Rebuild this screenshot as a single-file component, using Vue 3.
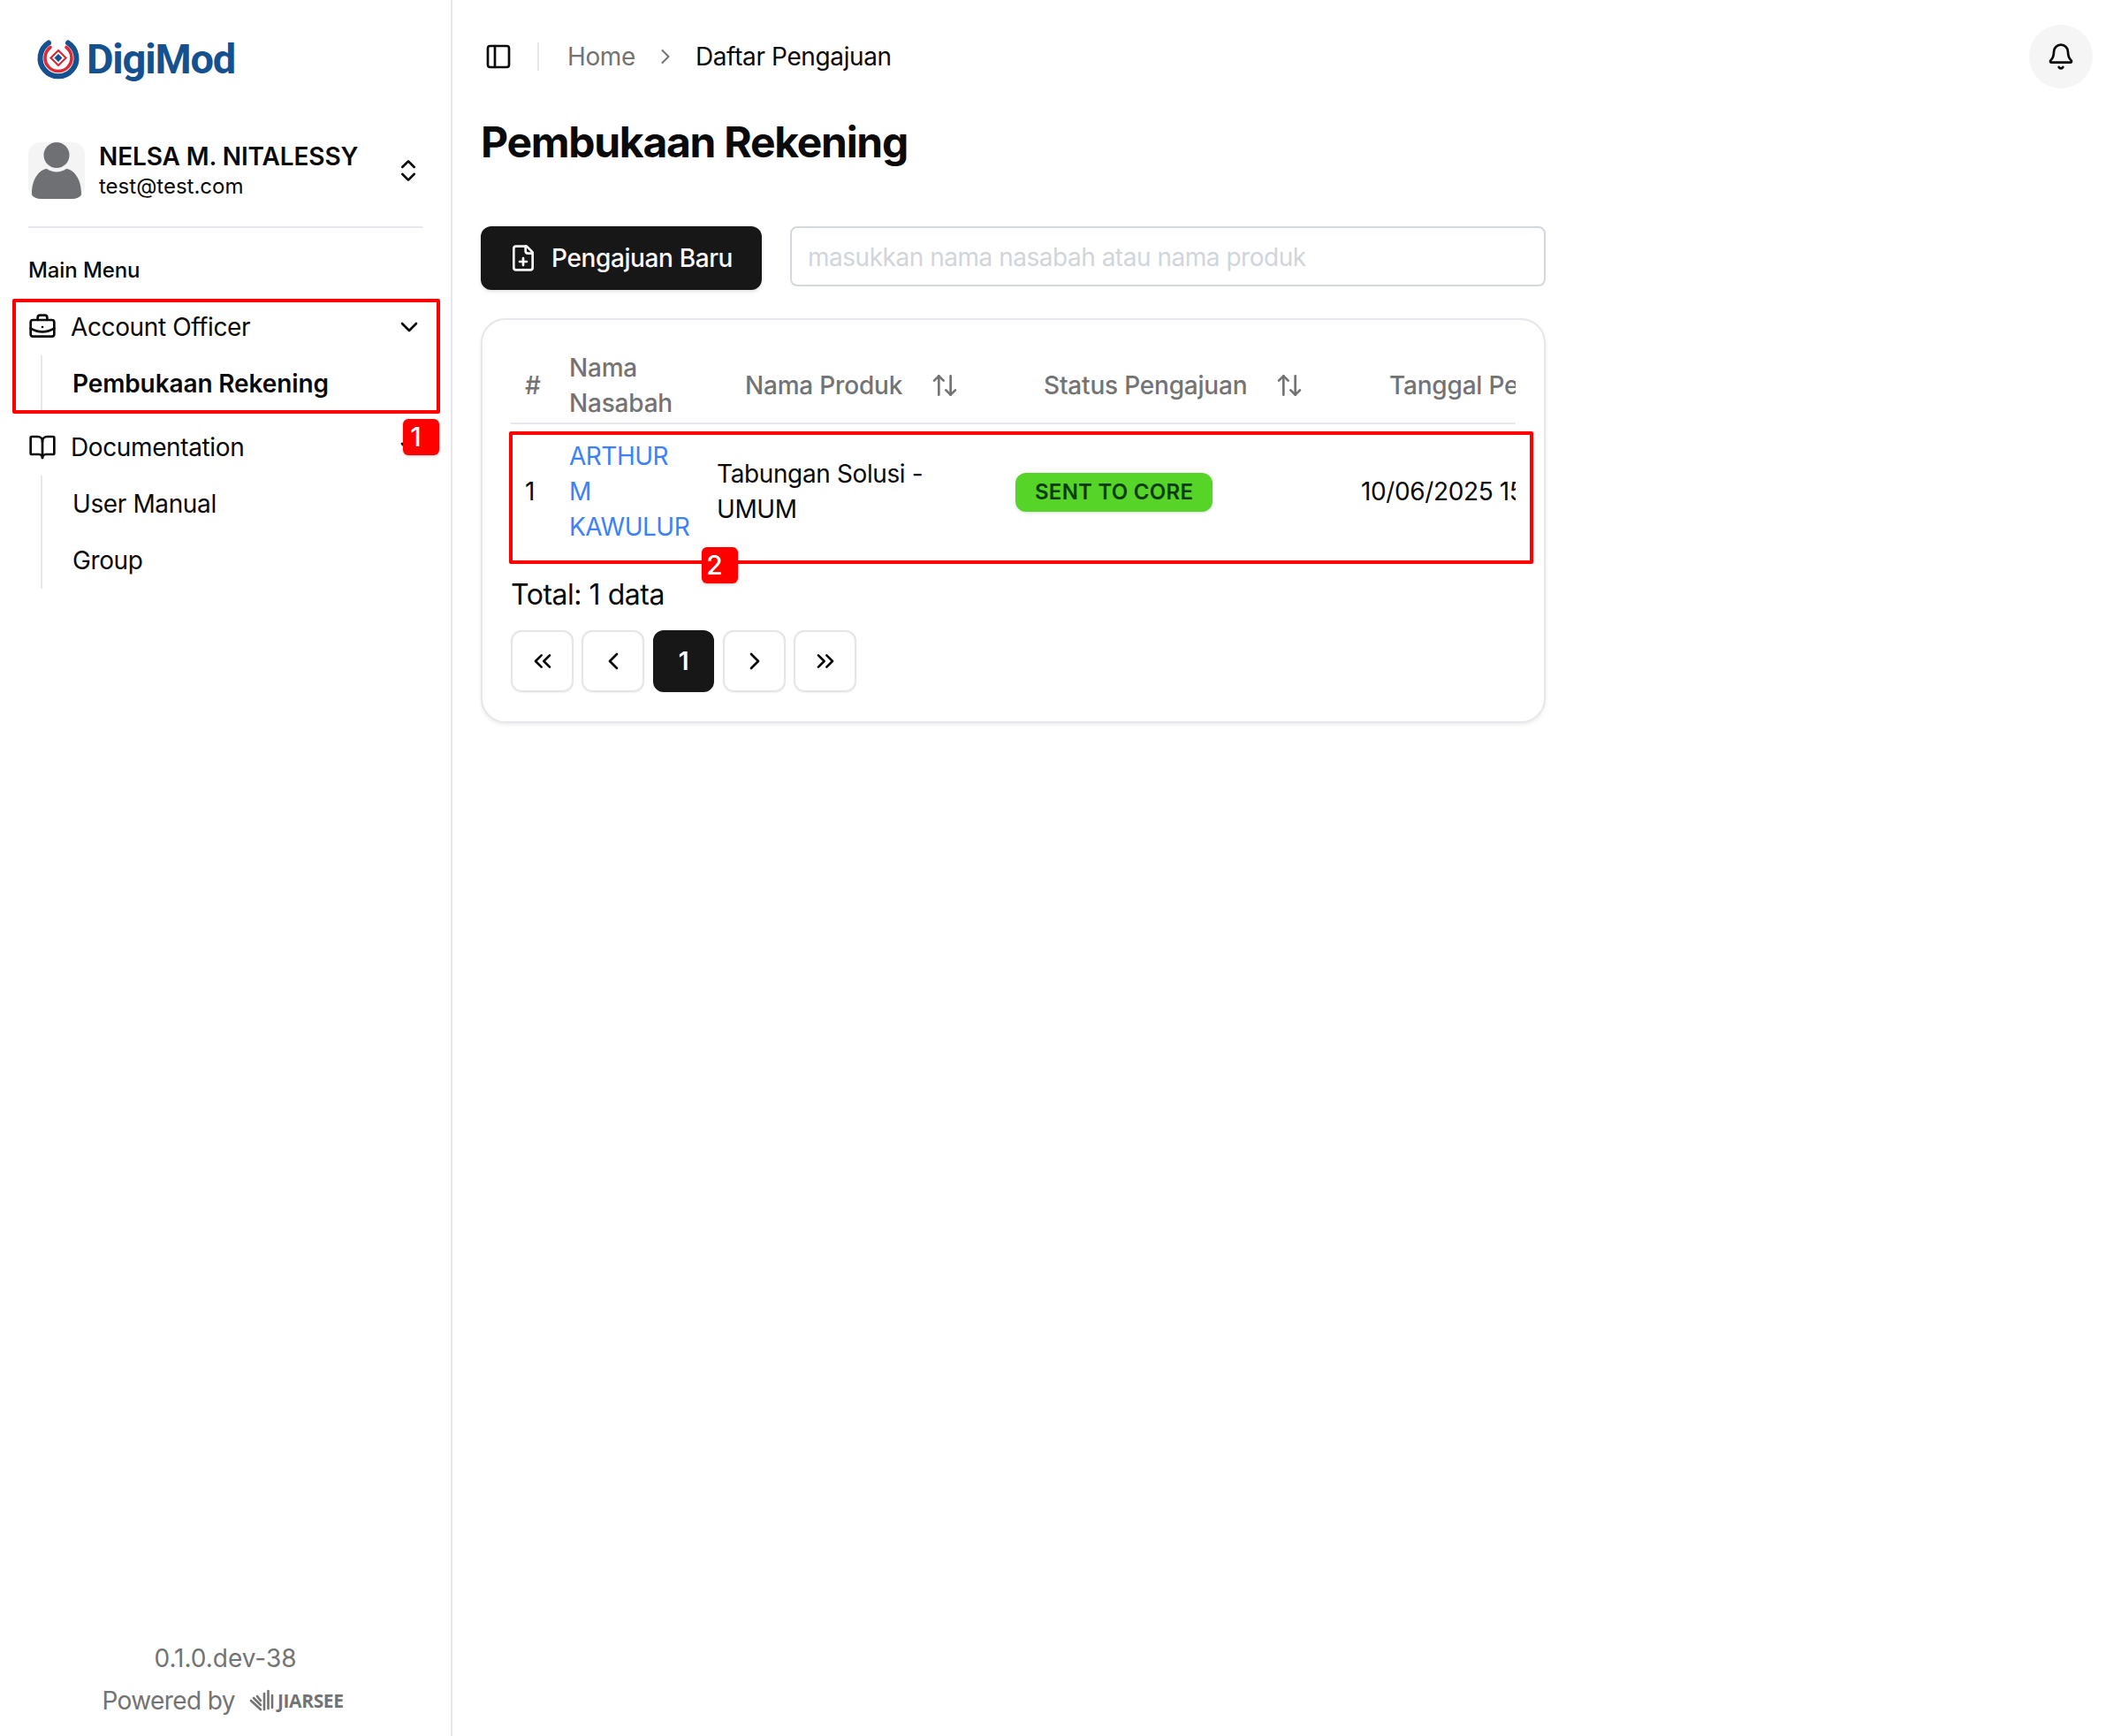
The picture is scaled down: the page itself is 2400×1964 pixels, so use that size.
<script setup>
const menus = [
  { key: 'ao', label: 'Account Officer', icon: 'brief', subs: [{ label: 'Pembukaan Rekening', active: true }] },
  { key: 'doc', label: 'Documentation', icon: 'book', subs: [{ label: 'User Manual' }, { label: 'Group' }] },
]
const pages = [
  { key: 'first', paths: ['m11 17-5-5 5-5', 'm18 17-5-5 5-5'] },
  { key: 'prev', paths: ['m15 18-6-6 6-6'] },
  { key: 'one', text: '1' },
  { key: 'next', paths: ['m9 18 6-6-6-6'] },
  { key: 'last', paths: ['m6 17 5-5-5-5', 'm13 17 5-5-5-5'] },
]
</script>

<template>
  <div class="app">
    <aside class="sidebar">
      <div class="logo">
        <svg class="logo-mark" viewBox="0 0 50 46" width="50" height="46">
          <path d="M14 4.500A20.500 20.500 0 1 0 36 4.500" fill="none" stroke="#15508f" stroke-width="6" stroke-linecap="round" />
          <path d="M16 9.500A15 15 0 1 0 34 9.500" fill="none" stroke="#dc2b37" stroke-width="3.600" stroke-linecap="round" />
          <path d="M25 13 33.500 21.500 25 30 16.500 21.500Z" fill="none" stroke="#dc2b37" stroke-width="2.200" />
          <path d="M25 17 29.500 21.500 25 26 20.500 21.500Z" fill="#15508f" />
        </svg>
        <span class="logo-text">DigiMod</span>
      </div>

      <div class="user">
        <div class="avatar">
          <svg viewBox="0 0 64 64" width="64" height="64">
            <circle cx="32" cy="14.500" r="14.500" fill="#6f7074" />
            <path d="M4 58C4 42 12 31 21 30c3 2 7 3.500 11 3.500S40 32 43 30c9 1 17 12 17 28 0 3-2 6-6 6H10c-4 0-6-3-6-6Z" fill="#6f7074" />
          </svg>
        </div>
        <div class="user-text">
          <div class="user-name">NELSA M. NITALESSY</div>
          <div class="user-mail">test@test.com</div>
        </div>
        <svg class="icon" viewBox="0 0 24 24"><path d="m7 15 5 5 5-5" /><path d="m7 9 5-5 5 5" /></svg>
      </div>

      <div class="menu-label">Main Menu</div>

      <nav class="nav">
        <div v-for="m in menus" :key="m.key" class="group">
          <div class="nav-row">
            <svg v-if="m.icon === 'brief'" class="icon" viewBox="0 0 24 24">
              <path d="M12 12h.01" /><path d="M16 6V4a2 2 0 0 0-2-2h-4a2 2 0 0 0-2 2v2" />
              <path d="M22 13a18.150 18.150 0 0 1-20 0" /><rect width="20" height="14" x="2" y="6" rx="2" />
            </svg>
            <svg v-else class="icon" viewBox="0 0 24 24">
              <path d="M12 7v14" />
              <path d="M3 18a1 1 0 0 1-1-1V4a1 1 0 0 1 1-1h5a4 4 0 0 1 4 4 4 4 0 0 1 4-4h5a1 1 0 0 1 1 1v13a1 1 0 0 1-1 1h-6a3 3 0 0 0-3 3 3 3 0 0 0-3-3z" />
            </svg>
            <span class="nav-label">{{ m.label }}</span>
            <svg class="icon" viewBox="0 0 24 24"><path d="m6 9 6 6 6-6" /></svg>
          </div>
          <div class="subs">
            <div v-for="s in m.subs" :key="s.label" class="sub" :class="{ active: s.active }">{{ s.label }}</div>
          </div>
        </div>
        <div class="mark mark-nav"></div>
        <div class="tag tag-one">1</div>
      </nav>

      <footer class="side-foot">
        <div class="version">0.1.0.dev-38</div>
        <div class="powered">
          <span>Powered by</span>
          <span class="jiarsee">
            <svg viewBox="0 0 30 28" width="30" height="28">
              <g stroke="#737373" stroke-width="2.600" stroke-linecap="round" fill="none">
                <path d="M26 8v14" /><path d="M21.500 3v20" /><path d="M17 6v18" />
                <path d="M2 14l11 10" /><path d="M5 11l8 8" /><path d="M9 9l4 5" />
              </g>
            </svg>
            <b>JIARSEE</b>
          </span>
        </div>
      </footer>
    </aside>

    <main class="main">
      <header class="topbar">
        <svg class="icon panel" viewBox="0 0 24 24"><rect width="18" height="18" x="3" y="3" rx="2" /><path d="M9 3v18" /></svg>
        <span class="sep"></span>
        <span class="crumb-home">Home</span>
        <svg class="icon crumb-arrow" viewBox="0 0 24 24"><path d="m9 18 6-6-6-6" /></svg>
        <span class="crumb-now">Daftar Pengajuan</span>
        <div class="bell">
          <svg class="icon" viewBox="0 0 24 24">
            <path d="M10.268 21a2 2 0 0 0 3.464 0" />
            <path d="M3.262 15.326A1 1 0 0 0 4 17h16a1 1 0 0 0 .74-1.673C19.410 13.956 18 12.499 18 8A6 6 0 0 0 6 8c0 4.499-1.411 5.956-2.738 7.326" />
          </svg>
        </div>
      </header>

      <h1 class="title">Pembukaan Rekening</h1>

      <div class="content">
        <div class="toolbar">
          <button class="new-btn">
            <svg class="icon" viewBox="0 0 24 24">
              <path d="M15 2H6a2 2 0 0 0-2 2v16a2 2 0 0 0 2 2h12a2 2 0 0 0 2-2V7Z" />
              <path d="M14 2v4a2 2 0 0 0 2 2h4" /><path d="M9 15h6" /><path d="M12 18v-6" />
            </svg>
            Pengajuan Baru
          </button>
          <input class="search" placeholder="masukkan nama nasabah atau nama produk" />
        </div>

        <section class="card">
          <div class="scroller">
            <table class="table">
              <colgroup>
                <col class="c1" /><col class="c2" /><col class="c3" /><col class="c4" /><col class="c5" />
              </colgroup>
              <thead>
                <tr>
                  <th>#</th>
                  <th>Nama<br />Nasabah</th>
                  <th>
                    <div class="sort">Nama Produk
                      <svg class="icon" viewBox="0 0 24 24"><path d="m21 16-4 4-4-4" /><path d="M17 20V4" /><path d="m3 8 4-4 4 4" /><path d="M7 4v16" /></svg>
                    </div>
                  </th>
                  <th>
                    <div class="sort">Status Pengajuan
                      <svg class="icon" viewBox="0 0 24 24"><path d="m21 16-4 4-4-4" /><path d="M17 20V4" /><path d="m3 8 4-4 4 4" /><path d="M7 4v16" /></svg>
                    </div>
                  </th>
                  <th><div class="sort">Tanggal Pengajuan</div></th>
                </tr>
              </thead>
              <tbody>
                <tr>
                  <td>1</td>
                  <td class="link">ARTHUR<br />M<br />KAWULUR</td>
                  <td>Tabungan Solusi -<br />UMUM</td>
                  <td><span class="status">SENT TO CORE</span></td>
                  <td class="nowrap">10/06/2025 15:30:00</td>
                </tr>
              </tbody>
            </table>
          </div>
          <div class="total">Total: 1 data</div>
          <div class="pager">
            <div v-for="p in pages" :key="p.key" class="page" :class="{ current: p.text }">
              <template v-if="p.text">{{ p.text }}</template>
              <svg v-else class="icon" viewBox="0 0 24 24"><path v-for="d in p.paths" :key="d" :d="d" /></svg>
            </div>
          </div>
          <div class="mark mark-row"></div>
          <div class="tag tag-two">2</div>
        </section>
      </div>
    </main>
  </div>
</template>

<style>
html, body { margin: 0; background: #fff; }
</style>

<style scoped>
.app {
  display: flex;
  width: 2400px;
  height: 1964px;
  overflow: hidden;
  background: #fff;
  color: #0a0a0a;
  font-family: Inter, "Liberation Sans", sans-serif;
  font-size: 28px;
  line-height: 40px;
  letter-spacing: -0.38px;
}
.icon {
  width: 32px;
  height: 32px;
  flex: none;
  fill: none;
  stroke: currentColor;
  stroke-width: 2;
  stroke-linecap: round;
  stroke-linejoin: round;
}
.sidebar {
  width: 512px;
  box-sizing: border-box;
  flex: none;
  display: flex;
  flex-direction: column;
  border-right: 2px solid #e5e7eb;
  position: relative;
}
.logo {
  height: 46px;
  margin: 44px 0 0 41px;
  display: flex;
  align-items: center;
  gap: 7px;
}
.logo-text {
  font-family: Roboto, sans-serif;
  font-weight: 700;
  font-size: 47px;
  line-height: 46px;
  color: #15508f;
  letter-spacing: -1.2px;
}
.user {
  margin: 69px 32px 0;
  padding-bottom: 29px;
  border-bottom: 2px solid #e5e7eb;
  display: flex;
  align-items: center;
  gap: 16px;
}
.avatar {
  width: 64px;
  height: 64px;
  margin-top: -1px;
  border-radius: 14px;
  background: #f4f4f5;
  overflow: hidden;
  flex: none;
}
.avatar svg { display: block; }
.user-text { flex: 1; min-width: 0; }
.user-name { font-weight: 600; font-size: 28px; line-height: 36px; letter-spacing: -0.1px; }
.user-mail { font-size: 24px; line-height: 32px; letter-spacing: 0; }
.menu-label {
  margin: 32px 32px 0;
  font-size: 24px;
  font-weight: 500;
  line-height: 32px;
  letter-spacing: -0.1px;
}
.nav { margin: 16px 32px 0; position: relative; }
.group + .group { margin-top: 8px; }
.nav-row {
  height: 64px;
  display: flex;
  align-items: center;
  gap: 16px;
}
.nav-row .icon:last-child { margin-right: -1px; }
.nav-label { flex: 1; }
.subs {
  margin-left: 14px;
  border-left: 2px solid #e5e7eb;
  padding-left: 34px;
}
.sub { height: 64px; display: flex; align-items: center; }
.sub.active { font-weight: 600; letter-spacing: -0.12px; }
.mark {
  position: absolute;
  border: 4px solid #ff0000;
  box-sizing: border-box;
  border-radius: 2px;
  pointer-events: none;
}
.mark-nav { left: -18px; top: 0; width: 484px; height: 130px; }
.tag {
  position: absolute;
  width: 41px;
  height: 41px;
  background: #ff0000;
  color: #fff;
  border-radius: 6px;
  font-size: 30px;
  font-weight: 500;
  line-height: 40px;
  letter-spacing: 0;
  padding-right: 12px;
  box-sizing: border-box;
  text-align: center;
  box-shadow: 0 1px 3px rgba(0, 0, 0, 0.25);
}
.tag-one { left: 424px; top: 136px; }
.side-foot {
  margin-top: auto;
  padding-bottom: 16px;
  color: #737373;
  text-align: center;
  line-height: 48px;
}
.version { letter-spacing: 0; }
.powered {
  display: flex;
  justify-content: center;
  align-items: center;
  gap: 16px;
  padding-right: 6px;
  letter-spacing: -0.6px;
}
.jiarsee { display: inline-flex; align-items: center; gap: 2px; }
.jiarsee svg { display: block; }
.jiarsee b {
  font-family: "Open Sans", sans-serif;
  font-weight: 700;
  font-size: 21px;
  letter-spacing: -0.4px;
}
.main { flex: 1; min-width: 0; padding: 0 32px; position: relative; }
.topbar {
  height: 128px;
  display: flex;
  align-items: center;
}
.panel { margin-left: 4px; }
.sep {
  width: 2px;
  height: 32px;
  background: #e5e7eb;
  margin: 0 32px 0 28px;
}
.crumb-home { color: #737373; }
.crumb-arrow { width: 28px; height: 28px; color: #737373; margin: 0 20px; stroke-width: 1.700; }
.bell {
  position: absolute;
  right: 32px;
  top: 28px;
  width: 72px;
  height: 72px;
  border-radius: 50%;
  background: #f5f5f5;
  display: flex;
  align-items: center;
  justify-content: center;
}
.title {
  margin: 1px 0 0;
  font-size: 48px;
  font-weight: 700;
  line-height: 64px;
  letter-spacing: -1.28px;
}
.content { width: 1205px; margin-top: 63px; }
.toolbar { display: flex; align-items: flex-start; gap: 32px; }
.new-btn {
  height: 72px;
  width: 318px;
  flex: none;
  box-sizing: border-box;
  padding: 0 32px;
  display: flex;
  align-items: center;
  gap: 16px;
  background: #171717;
  color: #fafafa;
  border: none;
  border-radius: 12px;
  font: inherit;
  font-weight: 500;
  letter-spacing: inherit;
  white-space: nowrap;
  box-shadow: 0 2px 4px rgba(0, 0, 0, 0.12);
}
.search {
  flex: 1;
  min-width: 0;
  height: 68px;
  box-sizing: border-box;
  border: 2px solid #d4d8de;
  border-radius: 8px;
  padding: 2px 18px 0;
  font: inherit;
  letter-spacing: -0.48px;
  outline: none;
}
.search::placeholder { color: #d1d5db; }
.card {
  position: relative;
  margin-top: 32px;
  box-sizing: border-box;
  border: 2px solid #e5e7eb;
  border-radius: 28px;
  padding: 32px 32px 33px;
  background: #fff;
  box-shadow: 0 2px 4px rgba(0, 0, 0, 0.08);
}
.scroller { overflow: hidden; }
.table {
  table-layout: fixed;
  width: 1366px;
  border-collapse: collapse;
}
.c1 { width: 50px; }
.c2 { width: 167px; }
.c3 { width: 338px; }
.c4 { width: 391px; }
.c5 { width: 420px; }
th {
  padding: 2px 16px 2px;
  text-align: left;
  color: #737373;
  font-weight: 500;
  letter-spacing: -0.2px;
  border-bottom: 2px solid #e5e7eb;
  white-space: nowrap;
}
td { padding: 16px; }
.sort {
  display: flex;
  align-items: center;
  gap: 32px;
  padding-left: 32px;
}
.link { color: #3b82f6; letter-spacing: -0.5px; }
.nowrap { white-space: nowrap; }
.status {
  display: inline-block;
  height: 44px;
  box-sizing: border-box;
  margin-top: 2px;
  padding: 0 22px;
  background: #56d428;
  color: #0b3b0b;
  border-radius: 12px;
  font-size: 24px;
  font-weight: 600;
  line-height: 44px;
  letter-spacing: 0.25px;
  vertical-align: middle;
  box-shadow: 0 1px 3px rgba(0, 0, 0, 0.15);
}
.total { margin-top: 17px; font-size: 32px; line-height: 48px; letter-spacing: -0.47px; }
.pager { display: flex; gap: 9px; margin-top: 16px; }
.page {
  width: 71px;
  height: 70px;
  box-sizing: border-box;
  border: 2px solid #e5e5e5;
  border-radius: 12px;
  display: flex;
  align-items: center;
  justify-content: center;
  box-shadow: 0 1px 2px rgba(0, 0, 0, 0.05);
}
.page.current {
  width: 69px;
  margin: 0 1px;
  background: #171717;
  border-color: #171717;
  color: #fff;
  font-weight: 600;
}
.mark-row { left: 30px; top: 126px; width: 1159px; height: 150px; }
.tag-two { left: 248px; top: 257px; }
</style>
